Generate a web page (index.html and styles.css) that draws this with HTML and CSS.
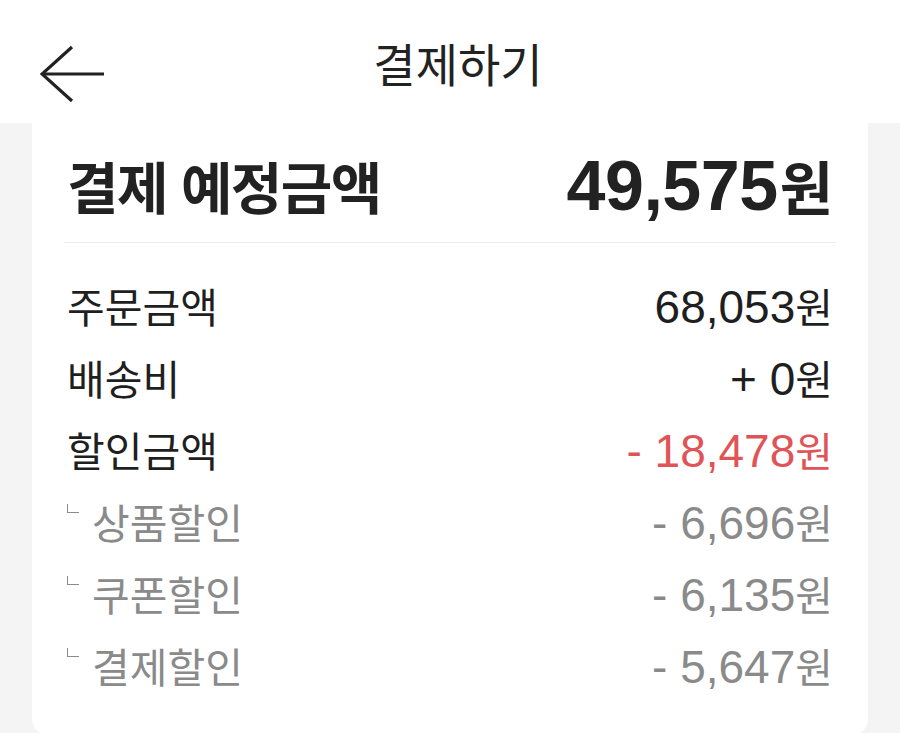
FILE: index.html
```html
<!DOCTYPE html>
<html lang="ko">
<head>
<meta charset="utf-8">
<title>결제하기</title>
<link rel="stylesheet" href="styles.css">
</head>
<body>
  <header class="topbar">
    <button class="back" aria-label="뒤로">
      <svg width="66" height="58" viewBox="0 0 66 58" fill="none" stroke="#222" stroke-width="3.2" stroke-linecap="butt" stroke-linejoin="miter">
        <path d="M32 2 L2 29 L32 56"/>
        <path d="M2 29 H64"/>
      </svg>
    </button>
    <h1 class="title">결제하기</h1>
  </header>

  <main class="page">
    <section class="card">
      <div class="total">
        <span class="total-label">결제 예정금액</span>
        <span class="total-value">49,575<span class="won">원</span></span>
      </div>
      <ul class="lines">
        <li class="line"><span class="label">주문금액</span><span class="num">68,053<span class="won">원</span></span></li>
        <li class="line"><span class="label">배송비</span><span class="num">+ 0<span class="won">원</span></span></li>
        <li class="line discount"><span class="label">할인금액</span><span class="num">- 18,478<span class="won">원</span></span></li>
        <li class="line sub"><span class="label"><i class="corner"></i>상품할인</span><span class="num">- 6,696<span class="won">원</span></span></li>
        <li class="line sub"><span class="label"><i class="corner"></i>쿠폰할인</span><span class="num">- 6,135<span class="won">원</span></span></li>
        <li class="line sub"><span class="label"><i class="corner"></i>결제할인</span><span class="num">- 5,647<span class="won">원</span></span></li>
      </ul>
    </section>
  </main>
</body>
</html>
```

FILE: styles.css
```css
* { box-sizing: border-box; }

html, body {
  margin: 0;
  padding: 0;
  background: #f4f4f4;
  font-family: "Liberation Sans", "Noto Sans CJK KR", sans-serif;
  color: #222;
}

.topbar {
  position: relative;
  height: 123px;
  background: #fff;
  display: flex;
  align-items: center;
  justify-content: center;
}

.back {
  position: absolute;
  left: 40px;
  top: 45px;
  padding: 0;
  border: 0;
  background: none;
  line-height: 0;
}

.title {
  margin: 0 0 0 16px;
  font-family: "Noto Sans CJK KR", sans-serif;
  font-size: 46px;
  font-weight: 400;
  line-height: 1;
}

.page {
  padding: 0 32px;
}

.card {
  background: #fff;
  border-radius: 0 0 16px 16px;
  padding: 0 35px 32px 35px;
  min-height: 612px;
}

.total {
  display: flex;
  justify-content: space-between;
  align-items: center;
  height: 120px;
  padding: 4px 3px 0;
  margin: 0 -3px;
  border-bottom: 1px solid #ededed;
}

.total-label {
  font-family: "Noto Sans CJK KR", sans-serif;
  font-size: 56px;
  font-weight: 700;
  letter-spacing: -1.6px;
}

.total-value {
  font-size: 70px;
  font-weight: 700;
  letter-spacing: -0.5px;
}

.total-value .won {
  font-size: 58px;
  margin-left: 2px;
}

.won {
  font-family: "Noto Sans CJK KR", sans-serif;
  font-size: 41px;
  letter-spacing: 0;
}

.lines {
  list-style: none;
  margin: 26px 0 0;
  padding: 0;
}

.line {
  display: flex;
  justify-content: space-between;
  align-items: baseline;
  height: 72px;
  line-height: 72px;
  color: #1f1f1f;
}

.label {
  font-family: "Noto Sans CJK KR", sans-serif;
  font-size: 41px;
}

.num {
  font-size: 46px;
}

.line.discount .num {
  color: #e05357;
}

.line.sub {
  color: #8a8a8a;
}

.corner {
  display: inline-block;
  width: 12px;
  height: 9px;
  border-left: 1.5px solid #8a8a8a;
  border-bottom: 1.5px solid #8a8a8a;
  margin-right: 13px;
  vertical-align: 26px;
}
```
